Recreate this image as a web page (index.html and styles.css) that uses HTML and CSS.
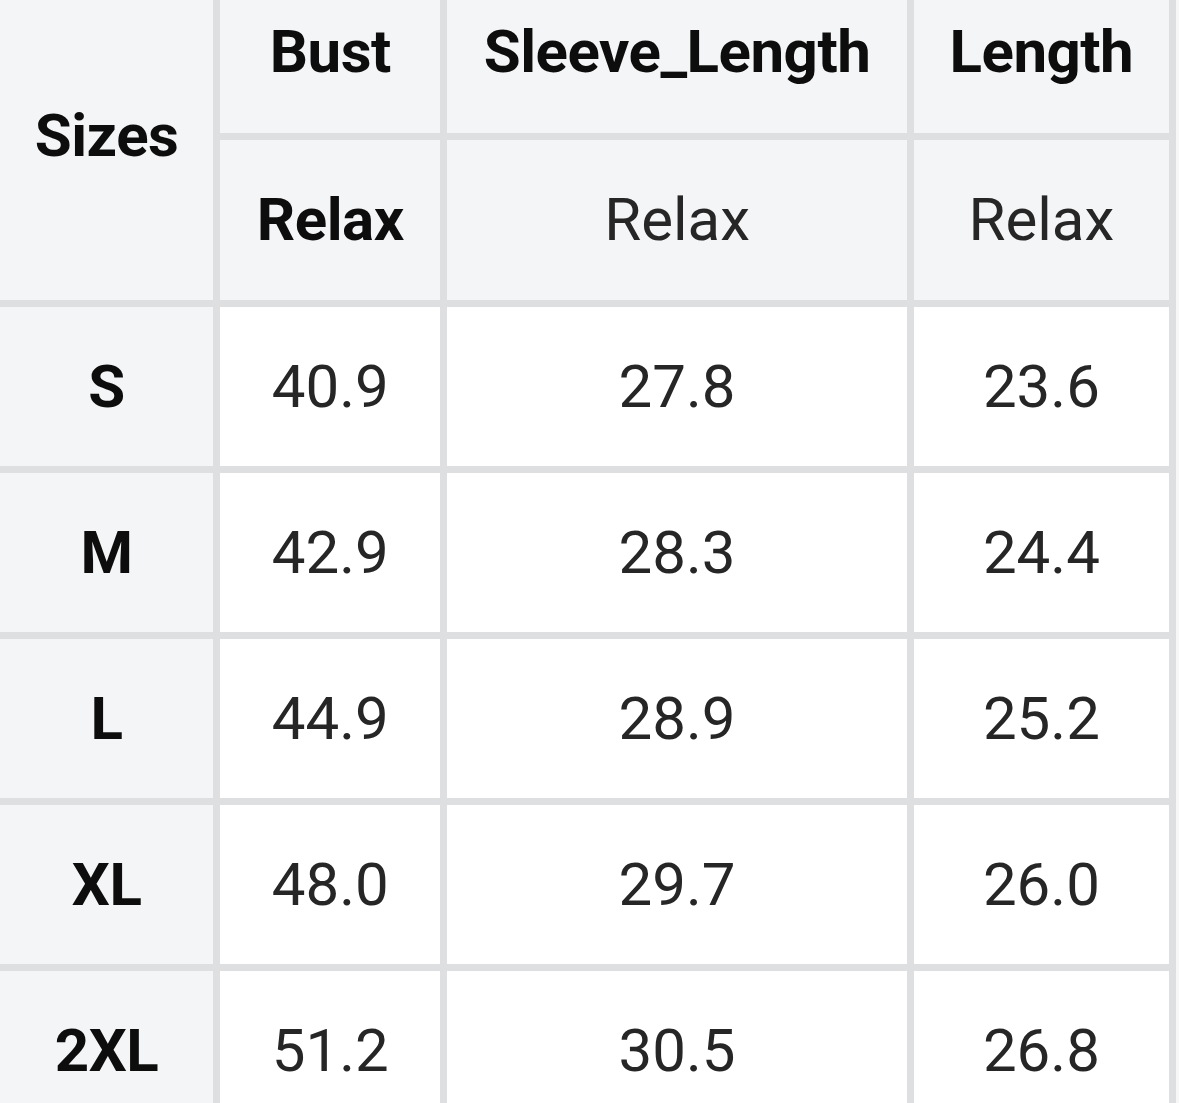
FILE: index.html
```html
<!DOCTYPE html>
<html>
<head>
<meta charset="utf-8">
<link rel="stylesheet" href="styles.css">
</head>
<body>
<table class="size-table">
  <colgroup>
    <col class="c1"><col class="c2"><col class="c3"><col class="c4">
  </colgroup>
  <thead>
    <tr class="h1">
      <th class="head side" rowspan="2">Sizes</th>
      <th class="head">Bust</th>
      <th class="head">Sleeve_Length</th>
      <th class="head">Length</th>
    </tr>
    <tr class="h2">
      <th class="head">Relax</th>
      <td class="head sub">Relax</td>
      <td class="head sub">Relax</td>
    </tr>
  </thead>
  <tbody>
    <tr><th class="side">S</th><td>40.9</td><td>27.8</td><td>23.6</td></tr>
    <tr><th class="side">M</th><td>42.9</td><td>28.3</td><td>24.4</td></tr>
    <tr><th class="side">L</th><td>44.9</td><td>28.9</td><td>25.2</td></tr>
    <tr><th class="side">XL</th><td>48.0</td><td>29.7</td><td>26.0</td></tr>
    <tr><th class="side">2XL</th><td>51.2</td><td>30.5</td><td>26.8</td></tr>
  </tbody>
</table>
</body>
</html>
```
FILE: styles.css
```css
html, body {
  margin: 0;
  padding: 0;
  background: #f7f7f8;
  overflow: hidden;
  width: 1179px;
  height: 1103px;
}
.size-table {
  font-family: Roboto, "Liberation Sans", sans-serif;
  border-collapse: separate;
  border-spacing: 7px;
  background: #dedfe1;
  table-layout: fixed;
  margin: -36px 0 0 -7px;
  width: 1183px;
}
.c1 { width: 213px; }
.c2 { width: 220px; }
.c3 { width: 459px; }
.c4 { width: 255px; }
th, td {
  padding: 0;
  text-align: center;
  vertical-align: middle;
  font-size: 60px;
  line-height: 1;
  white-space: nowrap;
}
td {
  background: #ffffff;
  color: #262626;
  font-weight: 400;
  height: 159px;
}
th {
  color: #0d0d0d;
  font-weight: 700;
  letter-spacing: -0.5px;
}
.head, .side {
  background: #f4f5f7;
}
.h1 th { height: 162px; }
.h2 th, .h2 td { height: 160px; }
.sub {
  color: #262626;
  font-weight: 400;
  letter-spacing: 0;
}
```
